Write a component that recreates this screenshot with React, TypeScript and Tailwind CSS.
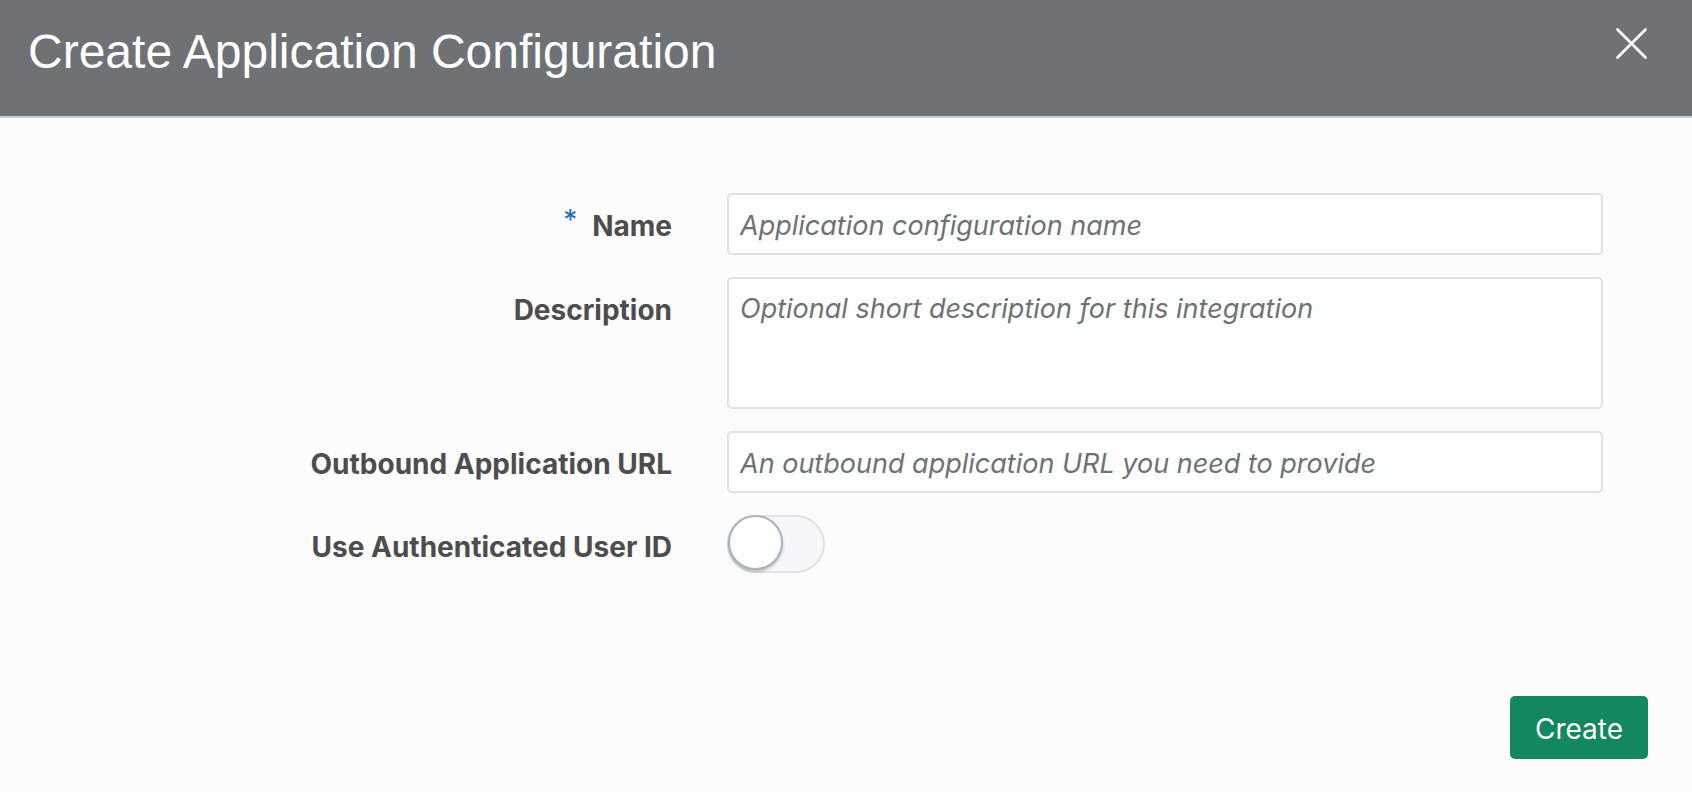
const LABEL =
  "w-[672px] shrink-0 pt-4 text-right text-[28px] leading-[34px] font-bold text-[#4d4d4d] [font-family:Inter,'Liberation_Sans',sans-serif]";

const FIELD =
  "ml-[55px] w-[876px] rounded-[5px] border-2 border-[#dfe3e6] bg-[#fdfefe] px-[11px] text-[27px] italic text-[#333] placeholder:text-[#6f7173] outline-none [font-family:Inter,'Liberation_Sans',sans-serif]";

function Toggle() {
  return (
    <div className="relative ml-[55px] h-[58px] w-[98px] rounded-full border-2 border-[#dfe3e6] bg-[#f5f7f9]">
      <span className="absolute -left-[1px] -top-[2px] h-[55px] w-[55px] rounded-full border-2 border-[#a8b2ba] bg-white shadow-[0_2px_3px_rgba(0,0,0,0.22)]" />
    </div>
  );
}

export default function App() {
  return (
    <div className="flex h-[792px] w-[1692px] flex-col bg-[#fcfcfc]">
      <header className="flex h-[118px] shrink-0 items-start justify-between border-b-2 border-[#c4ced5] bg-[#6f7275] pl-[28px] pr-[45px]">
        <h1 className="pt-[28px] text-[48px] leading-[48px] text-white [font-family:'Liberation_Sans',Arial,sans-serif]">
          Create Application Configuration
        </h1>
        <button className="mt-[28px] text-white" aria-label="Close">
          <svg width="31" height="31" viewBox="0 0 31 31" fill="none" stroke="currentColor" strokeWidth="2.6" strokeLinecap="round">
            <path d="M1.5 1.5 29.5 29.5M29.5 1.5 1.5 29.5" />
          </svg>
        </button>
      </header>

      <main className="flex flex-1 flex-col gap-[22px] pt-[75px]">
        <div className="flex items-start">
          <label className={LABEL}>
            <span className="relative -top-[6px] mr-[15px] font-normal text-[#1f6fc0]">*</span>
            Name
          </label>
          <input className={`${FIELD} h-[62px] pt-[2px]`} placeholder="Application configuration name" />
        </div>

        <div className="flex items-start">
          <label className={LABEL}>Description</label>
          <textarea
            className={`${FIELD} h-[132px] resize-none pt-[13px] leading-[34px]`}
            placeholder="Optional short description for this integration"
          />
        </div>

        <div className="flex items-start">
          <label className={LABEL}>Outbound Application URL</label>
          <input className={`${FIELD} h-[62px] pt-[2px]`} placeholder="An outbound application URL you need to provide" />
        </div>

        <div className="flex items-start">
          <label className={`${LABEL} pt-[15px]`}>Use Authenticated User ID</label>
          <Toggle />
        </div>

        <div className="mt-auto flex justify-end pb-[33px] pr-[44px]">
          <button className="h-[63px] w-[138px] rounded-[5px] bg-[#138760] pt-[3px] text-[28px] text-white [font-family:Inter,'Liberation_Sans',sans-serif]">
            Create
          </button>
        </div>
      </main>
    </div>
  );
}
